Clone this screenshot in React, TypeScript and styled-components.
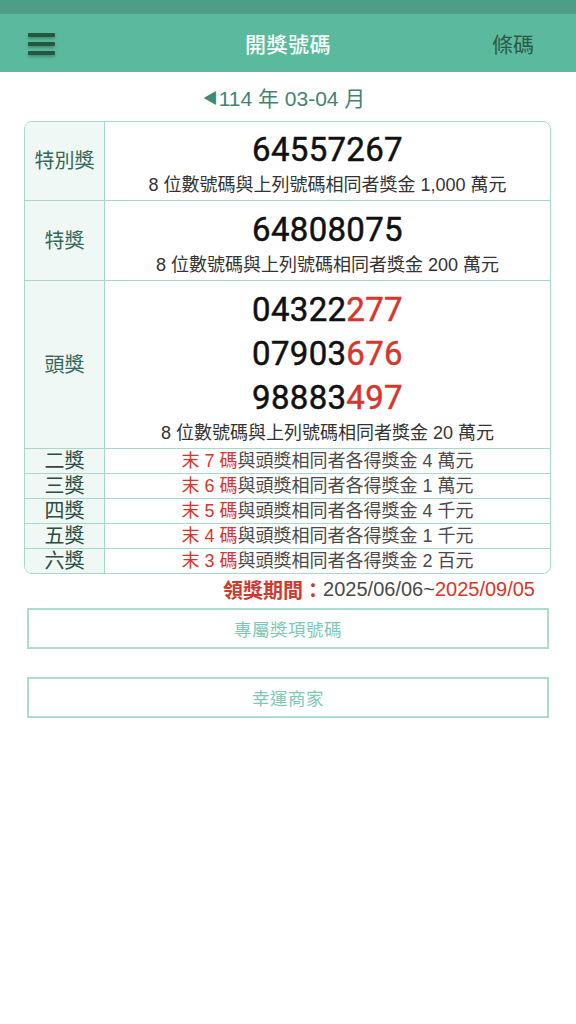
import React from 'react';
import styled, { createGlobalStyle } from 'styled-components';

const GlobalStyle = createGlobalStyle`
	html, body {
		margin: 0;
		padding: 0;
		background: #ffffff;
	}
	body {
		font-family: "Liberation Sans", "Noto Sans CJK TC", sans-serif;
	}
`;

const S = {
	Page: styled.div`
		width: 576px;
		min-height: 1024px;
		background: #ffffff;
		display: flex;
		flex-direction: column;
	`,

	StatusBar: styled.div`
		height: 14px;
		background: #4e9e87;
	`,

	Header: styled.div`
		height: 58px;
		background: #5bba9e;
		display: grid;
		grid-template-columns: 110px 1fr 110px;
		align-items: center;
	`,

	Burger: styled.div`
		margin-left: 28px;
		width: 27px;
		display: flex;
		flex-direction: column;
		gap: 5px;
		padding-top: 1px;
	`,

	BurgerBar: styled.span`
		display: block;
		height: 4px;
		background: #24573f;
		border-radius: 1px;
		box-shadow: 0 2px 3px rgba(0, 0, 0, 0.25);
	`,

	Title: styled.div`
		text-align: center;
		color: #f6fcfa;
		font-size: 21px;
		font-weight: 500;
		letter-spacing: 0.5px;
	`,

	Barcode: styled.div`
		text-align: right;
		padding-right: 42px;
		color: #2b5b48;
		font-size: 21px;
	`,

	DateRow: styled.div`
		height: 49px;
		display: flex;
		justify-content: center;
		align-items: center;
		color: #3e8472;
		font-size: 21px;
		padding-right: 8px;
		box-sizing: border-box;
	`,

	Arrow: styled.span`
		font-size: 15px;
		margin-right: 1px;
		color: #3a8a74;
	`,

	Table: styled.div`
		margin: 0 25px 0 24px;
		border: 1.5px solid #a6d9cb;
		border-radius: 8px;
		overflow: hidden;
	`,

	Row: styled.div`
		display: grid;
		grid-template-columns: 80px 1fr;
		& + & {
			border-top: 1.5px solid #a6d9cb;
		}
	`,

	Label: styled.div<{ $dark?: boolean }>`
		background: #eff8f5;
		border-right: 1.5px solid #a6d9cb;
		display: flex;
		justify-content: center;
		align-items: center;
		line-height: 1;
		color: ${(p) => (p.$dark ? '#2c4c42' : '#35675a')};
		font-size: 20px;
	`,

	Prize: styled.div<{ $top: number }>`
		display: flex;
		flex-direction: column;
		align-items: center;
		padding: ${(p) => p.$top}px 0 2px;
	`,

	Number: styled.div`
		font-family: Roboto, "Liberation Sans", sans-serif;
		font-size: 33px;
		font-weight: 400;
		-webkit-text-stroke: 0.5px currentColor;
		line-height: 44px;
		color: #111111;
		letter-spacing: 0.3px;
	`,

	Red: styled.span`
		color: #d8362b;
	`,

	Note: styled.div`
		font-size: 18px;
		line-height: 26px;
		color: #333333;
	`,

	Rule: styled.div`
		height: 24px;
		display: flex;
		justify-content: center;
		align-items: center;
		line-height: 1;
		font-size: 18px;
		color: #4a4a4a;
	`,

	RuleHead: styled.span`
		color: #d8362b;
	`,

	Claim: styled.div`
		height: 30px;
		margin-right: 41px;
		display: flex;
		justify-content: flex-end;
		align-items: center;
		font-size: 20px;
		color: #4a4a4a;
	`,

	ClaimLabel: styled.span`
		color: #d2392e;
		font-weight: 700;
	`,

	ClaimEnd: styled.span`
		color: #d8362b;
	`,

	Buttons: styled.div`
		margin: 4px 27px 0;
		display: flex;
		flex-direction: column;
		gap: 28px;
	`,

	Button: styled.div`
		height: 41px;
		box-sizing: border-box;
		border: 2px solid #abdcd0;
		display: flex;
		justify-content: center;
		align-items: center;
		color: #7ccab4;
		font-size: 17.5px;
		letter-spacing: 0.5px;
	`,
};

const firstPrizes = [
	['04322', '277'],
	['07903', '676'],
	['98883', '497'],
];

const rules = [
	{ label: '二獎', head: '末 7 碼', text: '與頭獎相同者各得獎金 4 萬元' },
	{ label: '三獎', head: '末 6 碼', text: '與頭獎相同者各得獎金 1 萬元' },
	{ label: '四獎', head: '末 5 碼', text: '與頭獎相同者各得獎金 4 千元' },
	{ label: '五獎', head: '末 4 碼', text: '與頭獎相同者各得獎金 1 千元' },
	{ label: '六獎', head: '末 3 碼', text: '與頭獎相同者各得獎金 2 百元' },
];

function App() {
	return (
		<S.Page>
			<GlobalStyle />
			<S.StatusBar />
			<S.Header>
				<S.Burger>
					<S.BurgerBar />
					<S.BurgerBar />
					<S.BurgerBar />
				</S.Burger>
				<S.Title>開獎號碼</S.Title>
				<S.Barcode>條碼</S.Barcode>
			</S.Header>

			<S.DateRow>
				<S.Arrow>◀</S.Arrow>114 年 03-04 月
			</S.DateRow>

			<S.Table>
				<S.Row>
					<S.Label>特別獎</S.Label>
					<S.Prize $top={6}>
						<S.Number>64557267</S.Number>
						<S.Note>8 位數號碼與上列號碼相同者獎金 1,000 萬元</S.Note>
					</S.Prize>
				</S.Row>
				<S.Row>
					<S.Label>特獎</S.Label>
					<S.Prize $top={7}>
						<S.Number>64808075</S.Number>
						<S.Note>8 位數號碼與上列號碼相同者獎金 200 萬元</S.Note>
					</S.Prize>
				</S.Row>
				<S.Row>
					<S.Label>頭獎</S.Label>
					<S.Prize $top={7}>
						{firstPrizes.map(([a, b]) => (
							<S.Number key={a}>
								{a}
								<S.Red>{b}</S.Red>
							</S.Number>
						))}
						<S.Note>8 位數號碼與上列號碼相同者獎金 20 萬元</S.Note>
					</S.Prize>
				</S.Row>
				{rules.map((r) => (
					<S.Row key={r.label}>
						<S.Label $dark>{r.label}</S.Label>
						<S.Rule>
							<S.RuleHead>{r.head}</S.RuleHead>
							{r.text}
						</S.Rule>
					</S.Row>
				))}
			</S.Table>

			<S.Claim>
				<S.ClaimLabel>領獎期間：</S.ClaimLabel>
				2025/06/06~<S.ClaimEnd>2025/09/05</S.ClaimEnd>
			</S.Claim>

			<S.Buttons>
				<S.Button>專屬獎項號碼</S.Button>
				<S.Button>幸運商家</S.Button>
			</S.Buttons>
		</S.Page>
	);
}

export default App;
